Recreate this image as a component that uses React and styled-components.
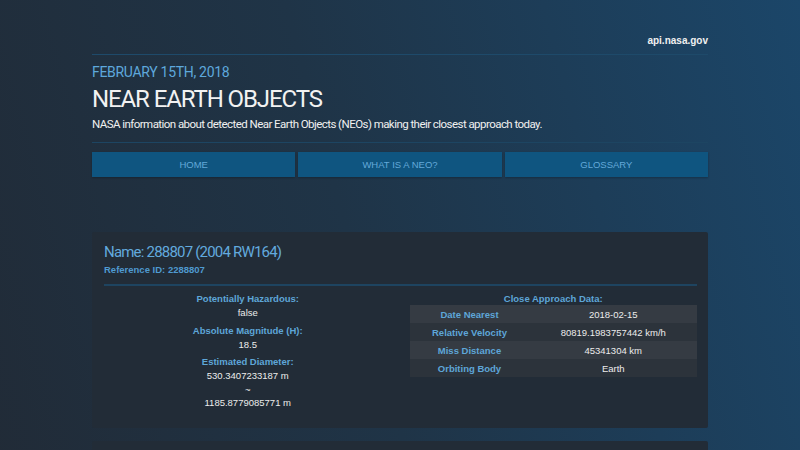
import React from "react";
import styled, { createGlobalStyle } from "styled-components";

const GlobalStyle = createGlobalStyle`
    html, body {
        margin: 0;
        padding: 0;
    }
    body {
        min-height: 100vh;
        background: linear-gradient(75deg, #212b37 0%, #1f3447 45%, #1b4669 100%);
        font-family: "Liberation Sans", Arial, sans-serif;
        color: #e8e8e8;
    }
`;

const Page = styled.div`
    width: 616px;
    margin: 0 auto;
    padding-top: 35px;
`;

const TopBar = styled.div`
    display: flex;
    justify-content: flex-end;
    padding-bottom: 8px;
    border-bottom: 1px solid #1e4a6a;
    font-size: 10px;
    font-weight: bold;
    color: #f0f0f0;
`;

const Header = styled.header`
    padding: 9px 0 10px;
    border-bottom: 1px solid #1d4562;
    font-family: Roboto, "Liberation Sans", sans-serif;
`;

const DateLine = styled.div`
    font-size: 14px;
    color: #5ea8dc;
    text-transform: uppercase;
    line-height: 16px;
    letter-spacing: -0.3px;
`;

const Title = styled.h1`
    margin: 5px 0 3px;
    font-size: 24px;
    font-weight: normal;
    line-height: 28px;
    color: #f2f2f2;
    letter-spacing: -1.1px;
`;

const Lead = styled.p`
    margin: 0;
    font-size: 11.5px;
    line-height: 16px;
    color: #f0f0f0;
    letter-spacing: -0.55px;
`;

const Nav = styled.nav`
    display: grid;
    grid-template-columns: repeat(3, 1fr);
    gap: 3px;
    margin-top: 9px;
`;

const NavButton = styled.a`
    display: flex;
    align-items: center;
    justify-content: center;
    height: 25px;
    background: #0f5580;
    color: #63a9d9;
    font-size: 9.5px;
    text-transform: uppercase;
    box-shadow: 0 1px 2px rgba(0, 0, 0, 0.25);
    cursor: pointer;
`;

const List = styled.main`
    display: flex;
    flex-direction: column;
    gap: 13px;
    margin-top: 55px;
`;

const Card = styled.section`
    background: #222c37;
    border-radius: 2px;
    padding: 10px 11px 18px 12px;
    min-height: ${(p) => (p.$stub ? "40px" : "auto")};
`;

const Name = styled.h2`
    margin: 0;
    font-family: Roboto, "Liberation Sans", sans-serif;
    font-size: 15px;
    font-weight: normal;
    line-height: 20px;
    color: #62aade;
    letter-spacing: -0.8px;
`;

const RefId = styled.div`
    margin-top: 2px;
    font-size: 9.5px;
    font-weight: bold;
    color: #4f9ad0;
`;

const Divider = styled.hr`
    margin: 9px 0 6px;
    border: 0;
    border-top: 2px solid #1e4460;
`;

const Columns = styled.div`
    display: grid;
    grid-template-columns: 1fr 1fr;
    gap: 18px;
`;

const Facts = styled.div`
    display: flex;
    flex-direction: column;
    align-items: center;
    gap: 4px;
`;

const Fact = styled.div`
    text-align: center;
`;

const Label = styled.div`
    font-size: 9.5px;
    font-weight: bold;
    line-height: 14px;
    color: #5ea6d8;
`;

const Value = styled.div`
    font-size: 9.5px;
    line-height: 13.5px;
    color: #ececec;
`;

const Table = styled.table`
    width: 100%;
    border-collapse: collapse;
    margin-top: -1px;
`;

const Row = styled.tr`
    background: ${(p) => (p.$odd ? "#2c333b" : "#353b43")};
`;

const Th = styled.th`
    width: 120px;
    height: 18px;
    padding: 0;
    font-size: 9.5px;
    font-weight: bold;
    color: #5ea6d8;
    text-align: center;
`;

const Td = styled.td`
    padding: 0;
    font-size: 9.5px;
    color: #ececec;
    text-align: center;
`;

const approach = [
    ["Date Nearest", "2018-02-15"],
    ["Relative Velocity", "80819.1983757442 km/h"],
    ["Miss Distance", "45341304 km"],
    ["Orbiting Body", "Earth"],
];

export default function App() {
    return (
        <>
            <GlobalStyle />
            <Page>
                <TopBar>api.nasa.gov</TopBar>
                <Header>
                    <DateLine>February 15th, 2018</DateLine>
                    <Title>NEAR EARTH OBJECTS</Title>
                    <Lead>
                        NASA information about detected Near Earth Objects (NEOs) making their closest
                        approach today.
                    </Lead>
                </Header>
                <Nav>
                    <NavButton>Home</NavButton>
                    <NavButton>What is a NEO?</NavButton>
                    <NavButton>Glossary</NavButton>
                </Nav>
                <List>
                    <Card>
                        <Name>Name: 288807 (2004 RW164)</Name>
                        <RefId>Reference ID: 2288807</RefId>
                        <Divider />
                        <Columns>
                            <Facts>
                                <Fact>
                                    <Label>Potentially Hazardous:</Label>
                                    <Value>false</Value>
                                </Fact>
                                <Fact>
                                    <Label>Absolute Magnitude (H):</Label>
                                    <Value>18.5</Value>
                                </Fact>
                                <Fact>
                                    <Label>Estimated Diameter:</Label>
                                    <Value>530.3407233187 m</Value>
                                    <Value>~</Value>
                                    <Value>1185.8779085771 m</Value>
                                </Fact>
                            </Facts>
                            <Fact>
                                <Label>Close Approach Data:</Label>
                                <Table>
                                    <tbody>
                                        {approach.map(([k, v], i) => (
                                            <Row key={k} $odd={i % 2 === 1}>
                                                <Th>{k}</Th>
                                                <Td>{v}</Td>
                                            </Row>
                                        ))}
                                    </tbody>
                                </Table>
                            </Fact>
                        </Columns>
                    </Card>
                    <Card $stub />
                </List>
            </Page>
        </>
    );
}
